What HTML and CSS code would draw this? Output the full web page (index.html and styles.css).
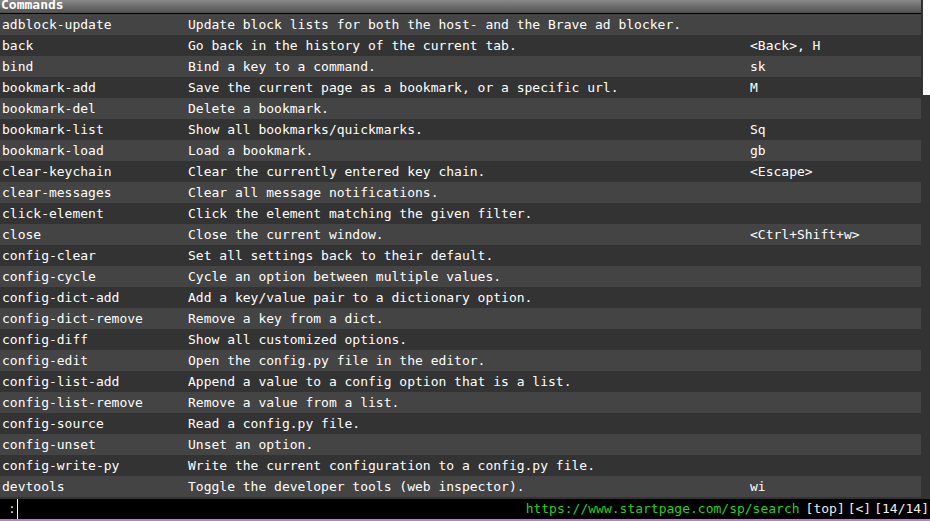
FILE: index.html
```html
<!DOCTYPE html>
<html>
<head>
<meta charset="utf-8">
<link rel="stylesheet" href="styles.css">
</head>
<body>
<div class="completion">
  <div class="list">
    <div class="category">Commands</div>
    <div class="row"><span>adblock-update</span><span>Update block lists for both the host- and the Brave ad blocker.</span><span></span></div>
    <div class="row"><span>back</span><span>Go back in the history of the current tab.</span><span>&lt;Back&gt;, H</span></div>
    <div class="row"><span>bind</span><span>Bind a key to a command.</span><span>sk</span></div>
    <div class="row"><span>bookmark-add</span><span>Save the current page as a bookmark, or a specific url.</span><span>M</span></div>
    <div class="row"><span>bookmark-del</span><span>Delete a bookmark.</span><span></span></div>
    <div class="row"><span>bookmark-list</span><span>Show all bookmarks/quickmarks.</span><span>Sq</span></div>
    <div class="row"><span>bookmark-load</span><span>Load a bookmark.</span><span>gb</span></div>
    <div class="row"><span>clear-keychain</span><span>Clear the currently entered key chain.</span><span>&lt;Escape&gt;</span></div>
    <div class="row"><span>clear-messages</span><span>Clear all message notifications.</span><span></span></div>
    <div class="row"><span>click-element</span><span>Click the element matching the given filter.</span><span></span></div>
    <div class="row"><span>close</span><span>Close the current window.</span><span>&lt;Ctrl+Shift+w&gt;</span></div>
    <div class="row"><span>config-clear</span><span>Set all settings back to their default.</span><span></span></div>
    <div class="row"><span>config-cycle</span><span>Cycle an option between multiple values.</span><span></span></div>
    <div class="row"><span>config-dict-add</span><span>Add a key/value pair to a dictionary option.</span><span></span></div>
    <div class="row"><span>config-dict-remove</span><span>Remove a key from a dict.</span><span></span></div>
    <div class="row"><span>config-diff</span><span>Show all customized options.</span><span></span></div>
    <div class="row"><span>config-edit</span><span>Open the config.py file in the editor.</span><span></span></div>
    <div class="row"><span>config-list-add</span><span>Append a value to a config option that is a list.</span><span></span></div>
    <div class="row"><span>config-list-remove</span><span>Remove a value from a list.</span><span></span></div>
    <div class="row"><span>config-source</span><span>Read a config.py file.</span><span></span></div>
    <div class="row"><span>config-unset</span><span>Unset an option.</span><span></span></div>
    <div class="row"><span>config-write-py</span><span>Write the current configuration to a config.py file.</span><span></span></div>
    <div class="row"><span>devtools</span><span>Toggle the developer tools (web inspector).</span><span>wi</span></div>
  </div>
  <div class="scrollbar"><div class="handle"></div></div>
</div>
<div class="gap"></div>
<div class="statusbar">
  <div class="cmd"><span class="colon">:</span><span class="cursor"></span></div>
  <div class="widgets">
    <span class="url">https://www.startpage.com/sp/search</span>
    <span>[top]</span>
    <span>[&lt;]</span>
    <span>[14/14]</span>
  </div>
</div>
<div class="page"></div>
</body>
</html>
```
FILE: styles.css
```css
html, body {
  margin: 0;
  padding: 0;
  background: #333333;
  overflow: hidden;
  width: 930px;
  height: 521px;
}
body {
  font-family: "DejaVu Sans Mono", monospace;
  font-size: 13px;
  color: #ffffff;
}
.completion {
  display: flex;
  height: 497px;
}
.list {
  width: 921px;
  flex: none;
}
.category {
  height: 13px;
  border-bottom: 1px solid #000;
  background: linear-gradient(to bottom, #888888, #505050);
  font-weight: bold;
  line-height: 10px;
  padding-left: 1px;
  overflow: hidden;
  white-space: nowrap;
}
.row {
  display: grid;
  grid-template-columns: 186px 562px 1fr;
  height: 21px;
  line-height: 21px;
  padding-left: 2px;
  white-space: nowrap;
  overflow: hidden;
  background: #444444;
}
.row:nth-child(odd) {
  background: #333333;
}
.scrollbar {
  flex: 1;
  background: #333333;
  padding-left: 2px;
}
.handle {
  height: 95px;
  background: #ffffff;
}
.gap {
  height: 2px;
  background: #333333;
}
.statusbar {
  height: 20px;
  background: #000000;
  display: flex;
  align-items: stretch;
  justify-content: space-between;
  line-height: 20px;
  white-space: nowrap;
}
.cmd {
  display: flex;
  align-items: stretch;
  padding-left: 8px;
}
.colon {
  color: #dddddd;
}
.cursor {
  width: 1px;
  background: #ffffff;
  margin-left: 1px;
}
.widgets {
  display: flex;
  gap: 3px;
  padding-right: 1px;
  color: #eeeeee;
}
.url {
  color: #22d022;
  margin-right: 3px;
}
.page {
  height: 2px;
  background: #c07ad0;
}
```
